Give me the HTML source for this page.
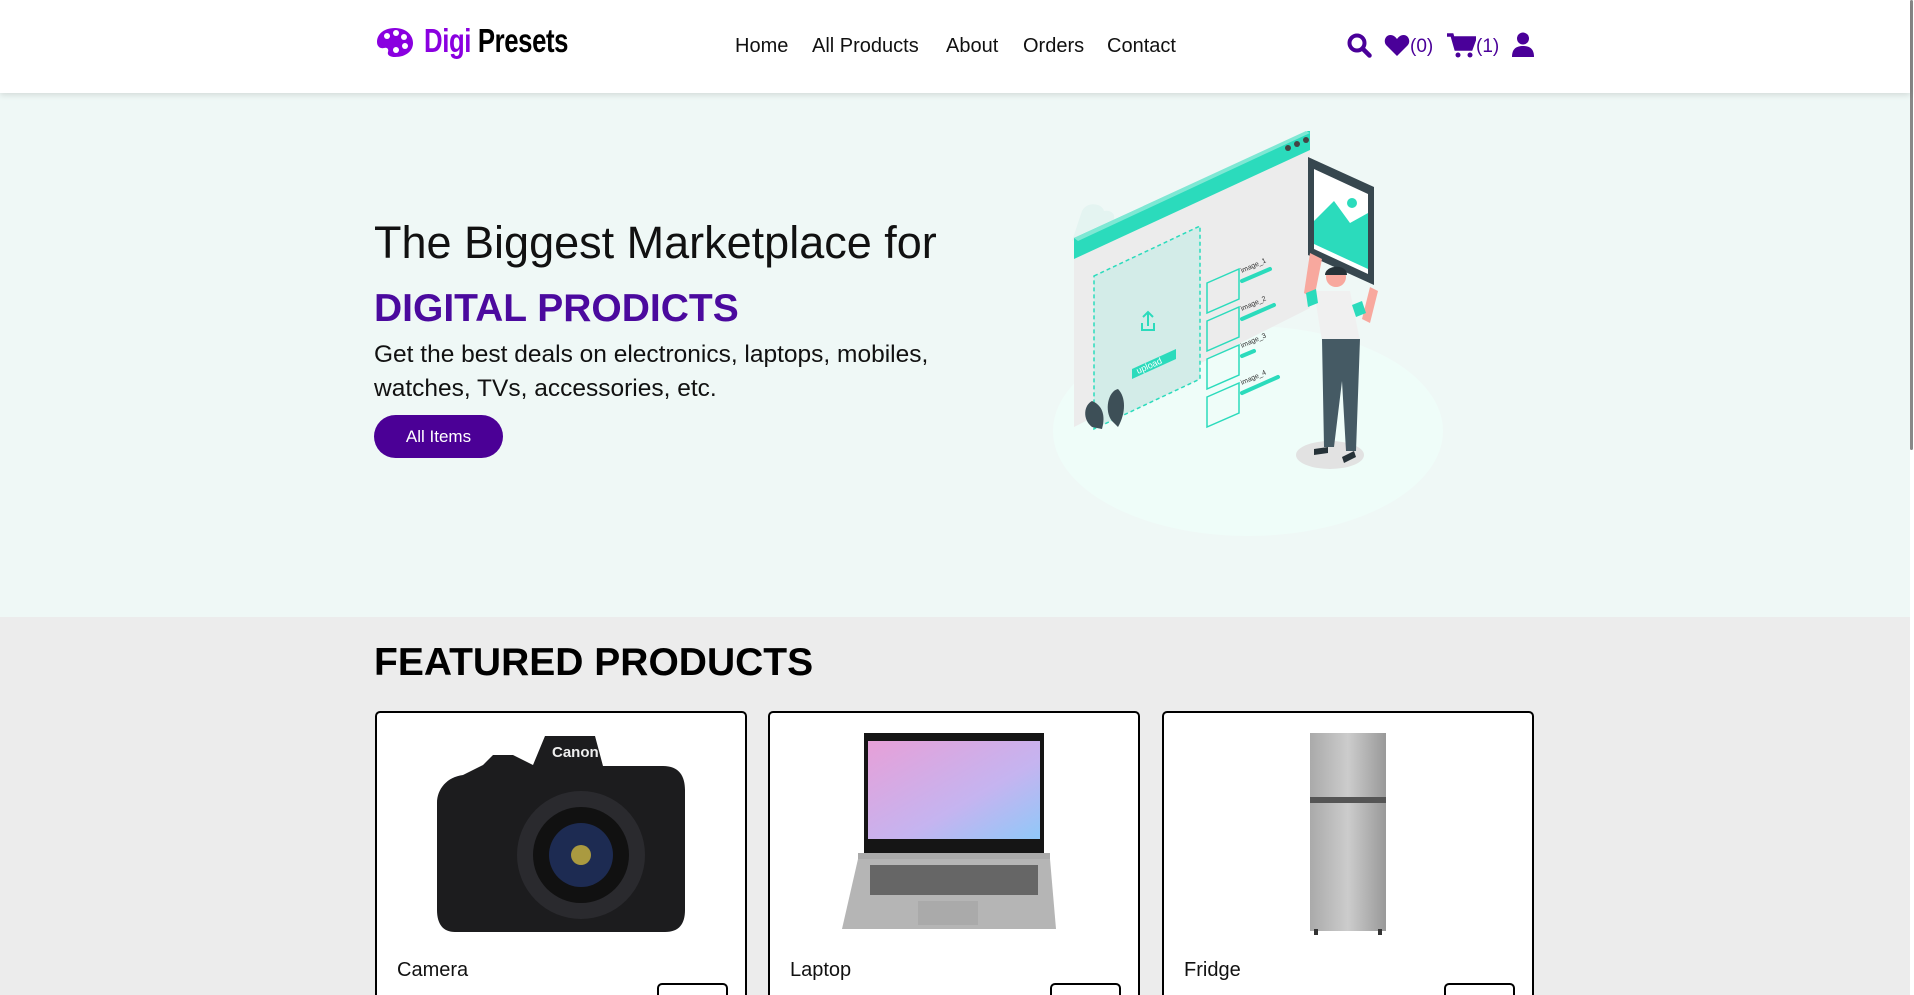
<!DOCTYPE html>
<html><head><meta charset="utf-8"><style>
*{margin:0;padding:0;box-sizing:border-box}
html,body{width:1914px;height:995px;overflow:hidden}
body{background:#ececec;font-family:"Liberation Sans",sans-serif;position:relative}
.hdr{position:absolute;left:0;top:0;width:1910px;height:93px;background:#fff;box-shadow:0 2px 6px rgba(0,0,0,.12);z-index:2}
.abs{position:absolute}
.logo{left:424px;top:22px;font-size:33px;font-weight:bold;letter-spacing:-0.5px;transform:scaleX(.78);transform-origin:left top;white-space:nowrap;font-family:"Liberation Sans Narrow","Liberation Sans",sans-serif}
.nav{top:35px;font-size:20px;color:#111}
.ic{color:#4a0099;font-size:19px}
.hero{position:absolute;left:0;top:93px;width:1910px;height:524px;background:#eff8f6}
.card{position:absolute;top:711px;width:372px;height:284px;border:2px solid #000;border-bottom:none;border-radius:5px 5px 0 0;background:#fff;overflow:hidden}
.card .nm{position:absolute;left:20px;top:246px;font-size:20px;color:#111}
.card .bt{position:absolute;left:280px;top:270px;width:71px;height:40px;border:2px solid #000;border-radius:5px}
.sb{position:absolute;left:1910px;top:0;width:4px;height:995px;background:#fff}
.sb div{width:3px;height:450px;background:#888;border-radius:2px}
</style></head><body>
<div class="hdr">
 <svg class="abs" style="left:376px;top:27px" width="38" height="30" viewBox="0 0 38 30"><path d="M19 1C8 1 1 7 1 15c0 5 4 7 7 6 3-1 5 1 4 4-1 3 2 5 7 5 11 0 18-6 18-14S30 1 19 1z" fill="#8a00e0"/><circle cx="11" cy="9" r="3" fill="#fff"/><circle cx="20" cy="6" r="3" fill="#fff"/><circle cx="28" cy="10" r="3" fill="#fff"/><circle cx="29" cy="19" r="3" fill="#fff"/><circle cx="20" cy="23" r="3" fill="#fff"/></svg>
 <div class="abs logo"><span style="color:#8a00e0">Digi</span> <span style="color:#000">Presets</span></div>
 <div class="abs nav" style="left:735px">Home</div>
 <div class="abs nav" style="left:812px">All Products</div>
 <div class="abs nav" style="left:946px">About</div>
 <div class="abs nav" style="left:1023px">Orders</div>
 <div class="abs nav" style="left:1107px">Contact</div>
 <svg class="abs" style="left:1347px;top:33px" width="26" height="25" viewBox="0 0 26 25"><circle cx="10" cy="10" r="7.5" fill="none" stroke="#4a0099" stroke-width="4"/><path d="M15.5 15.5l7 7" stroke="#4a0099" stroke-width="4.5" stroke-linecap="round"/></svg>
 <svg class="abs" style="left:1384px;top:34px" width="26" height="23" viewBox="0 0 26 23"><path d="M13 22L2.5 11.5C-1 8 1 1 6.5 1c3 0 5 2 6.5 4 1.5-2 3.5-4 6.5-4 5.5 0 7.5 7 4 10.5z" fill="#4a0099"/></svg>
 <div class="abs ic" style="left:1410px;top:36px">(0)</div>
 <svg class="abs" style="left:1447px;top:33px" width="29" height="25" viewBox="0 0 29 25"><path d="M0 2h5l4 14h15l4-11H7" fill="none" stroke="#4a0099" stroke-width="3.5"/><path d="M7 5h21l-4 11H10z" fill="#4a0099"/><circle cx="11" cy="22" r="2.5" fill="#4a0099"/><circle cx="23" cy="22" r="2.5" fill="#4a0099"/></svg>
 <div class="abs ic" style="left:1476px;top:36px">(1)</div>
 <svg class="abs" style="left:1512px;top:32px" width="22" height="25" viewBox="0 0 22 25"><circle cx="11" cy="6.5" r="6" fill="#4a0099"/><path d="M0 25c0-8 4-11 11-11s11 3 11 11z" fill="#4a0099"/></svg>
</div>
<div class="hero">
 <div class="abs" style="left:374px;top:124px;font-size:45px;color:#111">The Biggest Marketplace for</div>
 <div class="abs" style="left:374px;top:194px;font-size:39px;color:#4b0a9e;font-weight:bold">DIGITAL PRODICTS</div>
 <div class="abs" style="left:374px;top:245px;font-size:24.5px;line-height:34px;color:#111;width:600px">Get the best deals on electronics, laptops, mobiles, watches, TVs, accessories, etc.</div>
 <div class="abs" style="left:374px;top:322px;width:129px;height:43px;border-radius:22px;background:#4b0096;color:#fff;font-size:17px;text-align:center;line-height:43px">All Items</div>
 <svg class="abs" style="left:1052px;top:38px" width="395" height="405" viewBox="0 0 395 405">
  <ellipse cx="196" cy="300" rx="195" ry="105" fill="#effdf9"/>
  <path d="M30 80c5-10 20-8 22 0 10-2 14 8 6 12L20 110z" fill="#e4f4f1"/>
  <path d="M80 98c5-8 16-6 18 0 8 0 10 8 4 10L72 120z" fill="#e4f4f1"/>
  <path d="M22 107L258 -1v178L22 296z" fill="#ececec"/>
  <path d="M22 107L258 -1v20L22 128z" fill="#2bdbbc"/>
  <path d="M22 107L254 0l4 2L26 110z" fill="#7ee8d4"/>
  <circle cx="236" cy="17" r="3" fill="#444"/><circle cx="245" cy="13" r="3" fill="#444"/><circle cx="254" cy="9" r="3" fill="#444"/>
  <path d="M42 145l106-50v153L42 298z" fill="#d3ece8" stroke="#2bdbbc" stroke-width="1.5" stroke-dasharray="4 3"/>
  <path d="M96 195v-14m-5 5l5-5 5 5M90 192v7h12v-7" stroke="#2bdbbc" stroke-width="2" fill="none"/>
  <path d="M80 238l44-20v10L80 248z" fill="#2bdbbc"/>
  <text x="86" y="243" font-size="9" fill="#fff" transform="rotate(-24 86 243)">upload</text>
  <g fill="none" stroke="#2bdbbc" stroke-width="1.5">
   <path d="M155 152l32-14v30l-32 14z"/><path d="M155 190l32-14v30l-32 14z"/><path d="M155 228l32-14v30l-32 14z"/><path d="M155 266l32-14v30l-32 14z"/>
  </g>
  <g stroke="#2bdbbc" stroke-width="4" stroke-linecap="round"><path d="M190 150l28-12"/><path d="M190 188l32-14"/><path d="M190 225l12-5"/><path d="M190 262l36-16"/></g>
  <g font-size="7" fill="#333"><text x="190" y="142" transform="rotate(-24 190 142)">image_1</text><text x="190" y="180" transform="rotate(-24 190 180)">image_2</text><text x="190" y="217" transform="rotate(-24 190 217)">image_3</text><text x="190" y="254" transform="rotate(-24 190 254)">image_4</text></g>
  <path d="M60 290c-8-10-4-30 6-32 8 8 8 24 0 38zM40 296c-10-8-8-22 0-26 10 4 14 14 10 28z" fill="#3d4f57"/>
  <ellipse cx="278" cy="324" rx="34" ry="14" fill="#e2e2e2"/>
  <path d="M256 26l66 30v98l-66-30z" fill="#37474f"/><path d="M262 38l54 25v80l-54-25z" fill="#fff"/><path d="M262 90l20-20 16 22 18-10v56l-54-25z" fill="#2bdbbc"/><circle cx="300" cy="72" r="5" fill="#2bdbbc"/>
  <path d="M258 122l-6 40 10 6 8-40zM318 156l-8 32 8 4 8-32z" fill="#f8a89e"/>
  <path d="M262 160l36 0 10 50h-38z" fill="#f0f0f0"/><path d="M254 162l10-4 2 14-10 4zM300 174l10-4 4 12-10 4z" fill="#2bdbbc"/>
  <circle cx="284" cy="146" r="10" fill="#f8a89e"/><path d="M273 144c0-10 22-12 22 0z" fill="#263238"/>
  <path d="M270 208h38l-4 112h-10l-4-70-8 66h-10z" fill="#455a64"/>
  <path d="M262 318l14-2 0 6-14 2zM290 326l12-6 2 6-12 6z" fill="#263238"/>
 </svg>
</div>
<div class="abs" style="left:374px;top:641px;font-size:39px;font-weight:bold;color:#000">FEATURED PRODUCTS</div>
<div class="card" style="left:375px">
 <svg class="abs" style="left:58px;top:20px" width="252" height="202" viewBox="0 0 252 202"><path d="M110 3h50l8 30h60c16 0 22 10 22 24v120c0 14-6 22-20 22H20c-12 0-18-8-18-22V70c0-14 10-26 26-28l20-10 10-10h20l20 10z" fill="#1c1c1e"/><text x="117" y="24" font-size="15" font-weight="bold" fill="#eee">Canon</text><circle cx="146" cy="122" r="64" fill="#2a2a2e"/><circle cx="146" cy="122" r="48" fill="#111"/><circle cx="146" cy="122" r="32" fill="#1d2b52"/><circle cx="146" cy="122" r="10" fill="#aa9a40"/></svg>
 <div class="nm">Camera</div><div class="bt"></div></div>
<div class="card" style="left:768px">
 <svg class="abs" style="left:70px;top:20px" width="230" height="200" viewBox="0 0 230 200"><rect x="24" y="0" width="180" height="120" fill="#151515"/><defs><linearGradient id="g" x1="0" y1="0" x2="1" y2="1"><stop offset="0" stop-color="#e7a0d8"/><stop offset=".6" stop-color="#c5b4f0"/><stop offset="1" stop-color="#90c8f8"/></linearGradient></defs><rect x="28" y="8" width="172" height="98" fill="url(#g)"/><rect x="18" y="120" width="192" height="6" fill="#aaa"/><path d="M18 126h192l6 70H2z" fill="#b5b5b5"/><rect x="30" y="132" width="168" height="30" fill="#666"/><rect x="78" y="168" width="60" height="24" fill="#aaa"/></svg>
 <div class="nm">Laptop</div><div class="bt"></div></div>
<div class="card" style="left:1162px">
 <svg class="abs" style="left:146px;top:20px" width="78" height="202" viewBox="0 0 78 202"><defs><linearGradient id="f" x1="0" x2="1"><stop offset="0" stop-color="#aaa"/><stop offset=".5" stop-color="#ccc"/><stop offset="1" stop-color="#999"/></linearGradient></defs><rect x="0" y="0" width="76" height="198" fill="url(#f)"/><rect x="0" y="64" width="76" height="6" fill="#555"/><rect x="4" y="196" width="4" height="6" fill="#333"/><rect x="68" y="196" width="4" height="6" fill="#333"/></svg>
 <div class="nm">Fridge</div><div class="bt"></div></div>
<div class="sb"><div></div></div>
</body></html>
